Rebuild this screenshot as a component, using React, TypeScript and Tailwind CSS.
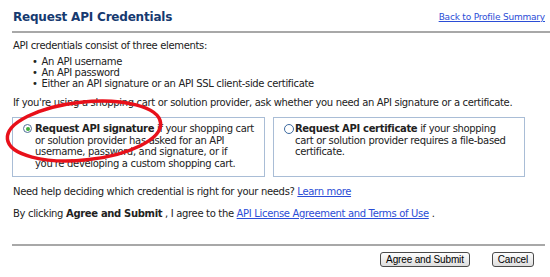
import React from "react";

export default function App() {
  const font = { fontFamily: '"DejaVu Sans", Verdana, sans-serif' };
  const btn =
    "h-[15px] px-[5px] text-[10px] leading-[13px] tracking-[-0.15px] text-black border border-[#4a4a4a] rounded-[3px] bg-gradient-to-b from-[#fdfdfd] to-[#dedede]";
  return (
    <div className="relative w-[550px] h-[277px] bg-white text-[10px] leading-[11.5px] tracking-[-0.33px] text-[#222]" style={font}>
      <div className="pl-[12px]">
        <div className="flex items-end justify-between pt-[10px] pb-[7px] pr-[5px] border-b-2 border-[#a8a8a8]">
          <h1 className="pl-[1px] text-[12px] font-bold text-[#163a70] leading-[14px] tracking-[-0.2px]">Request API Credentials</h1>
          <a className="text-[9px] text-[#2b4dd6] underline leading-[11px] mb-[1px] tracking-[-0.2px]">Back to Profile Summary</a>
        </div>
        <div className="pl-[1px] pt-[7px]">
          <p>API credentials consist of three elements:</p>
          <ul className="mt-[4px] pl-[19px] leading-[11px]">
            <li className="flex gap-[4px]"><span>•</span>An API username</li>
            <li className="flex gap-[4px]"><span>•</span>An API password</li>
            <li className="flex gap-[4px]"><span>•</span>Either an API signature or an API SSL client-side certificate</li>
          </ul>
          <p className="mt-[8px]">If you're using a shopping cart or solution provider, ask whether you need an API signature or a certificate.</p>
        </div>
        <div className="flex gap-[8px] mt-[9px] w-[513px]">
          <div className="w-[253px] h-[60px] border border-[#a9bdd6] pl-[10px] pr-[8px] pt-[5px] flex gap-[3px]">
            <span className="mt-[1px] w-[9px] h-[9px] shrink-0 rounded-full border border-[#4f6f97] bg-white flex items-center justify-center">
              <span className="w-[4px] h-[4px] rounded-full bg-[#3cae3c]" />
            </span>
            <p className="leading-[11.7px]"><b>Request API signature</b> if your shopping cart or solution provider has asked for an API username, password, and signature, or if you're developing a custom shopping cart.</p>
          </div>
          <div className="w-[252px] h-[60px] border border-[#a9bdd6] pl-[10px] pr-[8px] pt-[5px] flex gap-[1px]">
            <span className="mt-[1px] w-[10px] h-[10px] shrink-0 rounded-full border border-[#3d6aa0] bg-white" />
            <p className="leading-[11.7px]"><b>Request API certificate</b> if your shopping cart or solution provider requires a file-based certificate.</p>
          </div>
        </div>
        <p className="pl-[1px] mt-[9px]">Need help deciding which credential is right for your needs? <a className="text-[#2b4dd6] underline">Learn more</a></p>
        <p className="pl-[1px] mt-[10px]">By clicking <b>Agree and Submit</b> , I agree to the <a className="text-[#2b4dd6] underline">API License Agreement and Terms of Use</a> .</p>
        <div className="mt-[25px] w-[533px] border-t-2 border-[#a8a8a8]" />
        <div className="flex justify-end gap-[22px] w-[522px] mt-[6px]" style={{ fontFamily: '"Liberation Sans", Arial, sans-serif' }}>
          <button className={btn}>Agree and Submit</button>
          <button className={btn}>Cancel</button>
        </div>
      </div>
      <svg className="absolute left-0 top-0 pointer-events-none" width="550" height="277">
        <ellipse cx="84" cy="131" rx="77" ry="29" fill="none" stroke="#e8101a" strokeWidth="3.5" transform="rotate(-6 84 131)" />
      </svg>
    </div>
  );
}
